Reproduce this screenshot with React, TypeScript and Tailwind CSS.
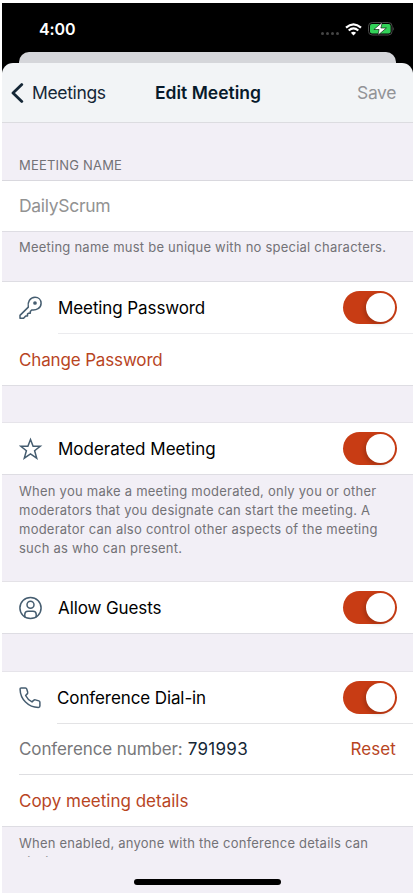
import type { ReactNode } from 'react';

function Toggle() {
  return (
    <div className="flex h-[33px] w-[54px] shrink-0 items-center justify-end rounded-full bg-[#c83c14] pr-[2px]">
      <div className="size-[29px] rounded-full bg-white shadow-[-2px_2px_4px_rgba(0,0,0,0.18)]" />
    </div>
  );
}

function SettingRow({ icon, label }: { icon: ReactNode; label: ReactNode }) {
  return (
    <div className="flex h-[51px] items-center bg-white pr-[16.5px] pl-[17px]">
      <div className="flex w-[39px] shrink-0 items-center text-[#455d70]">{icon}</div>
      <div className="flex-1 whitespace-nowrap text-black">{label}</div>
      <Toggle />
    </div>
  );
}

const iconProps = {
  width: 24,
  height: 24,
  viewBox: '0 0 24 24',
  fill: 'none',
  stroke: 'currentColor',
  strokeWidth: 1.5,
  strokeLinejoin: 'round' as const,
  strokeLinecap: 'round' as const,
};

function KeyIcon() {
  return (
    <svg {...iconProps}>
      <path d="M9.3 11.1C8.4 6.5 10.8 1.3 16 1.3C19.6 1.3 22.1 3.8 22.1 7.2C22.1 12.3 17.2 14.6 12.7 13.9L11.3 15.4V17.2H9.4L8.5 18.1V19.9H6.7L4.6 22.3H1V19.4Z" />
      <circle cx="16" cy="7" r="1.1" fill="currentColor" />
    </svg>
  );
}

function StarIcon() {
  return (
    <svg {...iconProps} strokeLinejoin="miter">
      <path d="M11.5 2.5L14.1 9.3H21.2L15.6 13.7L17.7 21.1L11.5 16.9L5.3 21.1L7.4 13.7L1.8 9.3H8.9Z" />
    </svg>
  );
}

function GuestIcon() {
  return (
    <svg {...iconProps}>
      <circle cx="11.5" cy="12" r="10.6" />
      <circle cx="11.5" cy="8.7" r="3.5" />
      <path d="M5.8 20.7V18.3Q5.8 15.2 9 15.2H14Q17.2 15.2 17.2 18.3V20.7" />
    </svg>
  );
}

function PhoneIcon() {
  return (
    <svg {...iconProps}>
      <path d="M2.3 1.9H6.4Q7.4 1.9 7.7 2.9L8.7 6.2Q9 7.1 8.2 7.9L6.6 9.5C8 12.3 10.1 14.4 13 15.9L14.6 14.4Q15.4 13.6 16.4 13.9L19.9 14.9Q20.9 15.2 20.9 16.2V20Q20.9 21.4 19.4 21.4C9.2 21.3 1.3 13 1.1 3.4Q1 1.9 2.3 1.9Z" />
    </svg>
  );
}

function WifiIcon() {
  return (
    <svg width="17" height="13" viewBox="0 0 17 13" fill="none" stroke="white" strokeWidth="2.2">
      <path d="M1 4.6Q8.5 -2 16 4.6" />
      <path d="M3.7 7.5Q8.5 3.4 13.3 7.5" />
      <path d="M8.5 12.5L5.9 9.8Q8.5 7.6 11.1 9.8Z" fill="white" stroke="none" />
    </svg>
  );
}

function BatteryIcon() {
  return (
    <svg width="27" height="14" viewBox="0 0 27 14">
      <rect x="0.5" y="0.5" width="23.6" height="12.5" rx="3.7" fill="none" stroke="#4a4a4a" />
      <path d="M25.2 4.7Q26.9 6.7 25.2 8.8Z" fill="#4a4a4a" />
      <rect x="2" y="2" width="20.6" height="9.5" rx="2" fill="#32d158" />
      <path d="M14.3 0.3L5.9 7.5H11.1L9.9 13.3L18.4 6H12.9Z" fill="white" stroke="black" strokeWidth="0.6" />
    </svg>
  );
}

export default function App() {
  return (
    <div className="h-[895px] w-[416px] overflow-hidden bg-white pt-[3px] pl-[2px] font-['Inter',sans-serif] text-[17px] leading-[22px] tracking-[-0.1px]">
      <div className="relative flex h-[890px] w-[411px] flex-col overflow-hidden bg-[#f2eff6]">
        <div className="h-[70px] shrink-0 bg-black">
          <div className="flex h-[49px] items-center pt-[3px] pr-[18px] pl-[37px]">
            <span className="flex-1 text-[16px] font-semibold tracking-[-0.1px] text-white">4:00</span>
            <div className="mt-[9px] mr-[6px] flex gap-[2px]">
              <i className="size-[3px] rounded-full bg-[#454545]" />
              <i className="size-[3px] rounded-full bg-[#454545]" />
              <i className="size-[3px] rounded-full bg-[#454545]" />
              <i className="size-[3px] rounded-full bg-[#454545]" />
            </div>
            <WifiIcon />
            <div className="ml-[6px]"><BatteryIcon /></div>
          </div>
          <div className="mx-[17px] h-[21px] rounded-t-[10px] bg-[#d5d6da]" />
        </div>
        <header className="-mt-[10px] flex h-[60px] shrink-0 items-center rounded-t-[11px] border-b border-[#dcdce0] bg-[#f2f4f6] pr-[17px] pl-[9px]">
          <div className="flex w-[144px] items-center text-[#152736]">
            <svg width="13" height="20" viewBox="0 0 13 20" fill="none" stroke="currentColor" strokeWidth="2.8" strokeLinecap="round" strokeLinejoin="round">
              <path d="M10.8 1.6L2 10L10.8 18.4" />
            </svg>
            <span className="ml-[8px] text-[17.5px] tracking-[-0.35px]">Meetings</span>
          </div>
          <h1 className="whitespace-nowrap text-[17.5px] font-semibold tracking-[0px] text-[#071a2b]">Edit Meeting</h1>
          <span className="ml-auto text-[17.5px] tracking-[-0.4px] text-[#929397]">Save</span>
        </header>

        <div className="flex h-[58px] shrink-0 items-end border-b border-[#d9d8de] pb-[4px] pl-[17px] text-[13px] tracking-[0.2px] text-[#737277]">MEETING NAME</div>
        <div className="flex h-[51px] shrink-0 items-center border-b border-[#dedde3] bg-white pl-[17px] text-[17.5px] tracking-[-0.3px] text-[#929292]"><span>DailyScrum</span></div>
        <div className="h-[50px] shrink-0 border-b border-[#dedde3] pt-[6px] pl-[17px] text-[13px] leading-[19px] tracking-[0.23px] whitespace-nowrap text-[#737277]">Meeting name must be unique with no special characters.</div>

        <section className="shrink-0 border-b border-[#dedde3] bg-white">
          <SettingRow icon={<KeyIcon />} label="Meeting Password" />
          <div className="ml-[56px] h-px bg-[#ebebee]" />
          <div className="flex h-[51px] items-center pl-[17px] tracking-[-0.15px] text-[#b8451f]"><span>Change Password</span></div>
        </section>
        <div className="h-[37px] shrink-0 border-b border-[#e6e4ea]" />
        <section className="shrink-0 border-b border-[#dedde3]">
          <SettingRow icon={<StarIcon />} label={<span className="tracking-[0px]">Moderated Meeting</span>} />
        </section>
        <div className="h-[107px] shrink-0 border-b border-[#e4e2e7] pt-[7px] pl-[17px] text-[13px] leading-[19px] tracking-[0.24px] whitespace-nowrap text-[#737277]">
          <p>When you make a meeting moderated, only you or other</p>
          <p>moderators that you designate can start the meeting. A</p>
          <p>moderator can also control other aspects of the meeting</p>
          <p>such as who can present.</p>
        </div>
        <section className="shrink-0 border-b border-[#dedde3]">
          <SettingRow icon={<GuestIcon />} label="Allow Guests" />
        </section>
        <div className="h-[38px] shrink-0 border-b border-[#e6e4ea]" />
        <section className="shrink-0 border-b border-[#dedde3] bg-white">
          <SettingRow icon={<PhoneIcon />} label={<span className="-ml-px">Conference Dial-in</span>} />
          <div className="ml-[55px] h-px bg-[#e3e3e5]" />
          <div className="flex h-[50px] items-center pr-[17px] pl-[17px]">
            <span className="text-[#77777a]">Conference number:</span>
            <span className="ml-[5px] tracking-[0.3px] text-[#152736]">791993</span>
            <span className="ml-auto tracking-[0.1px] text-[#b8451f]">Reset</span>
          </div>
          <div className="ml-[17px] h-px bg-[#dedee1]" />
          <div className="flex h-[51px] items-center pl-[17px] tracking-[0px] text-[#b8451f]"><span>Copy meeting details</span></div>
        </section>
        <div className="h-[30px] shrink-0 overflow-hidden pt-[7px] pl-[17px] text-[13px] leading-[19px] tracking-[0.23px] whitespace-nowrap text-[#737277]">
          <p>When enabled, anyone with the conference details can</p>
          <p>dial in.</p>
        </div>
        <div className="mt-[22px] ml-[132px] h-[6px] w-[147px] shrink-0 rounded-full bg-black" />
      </div>
    </div>
  );
}
